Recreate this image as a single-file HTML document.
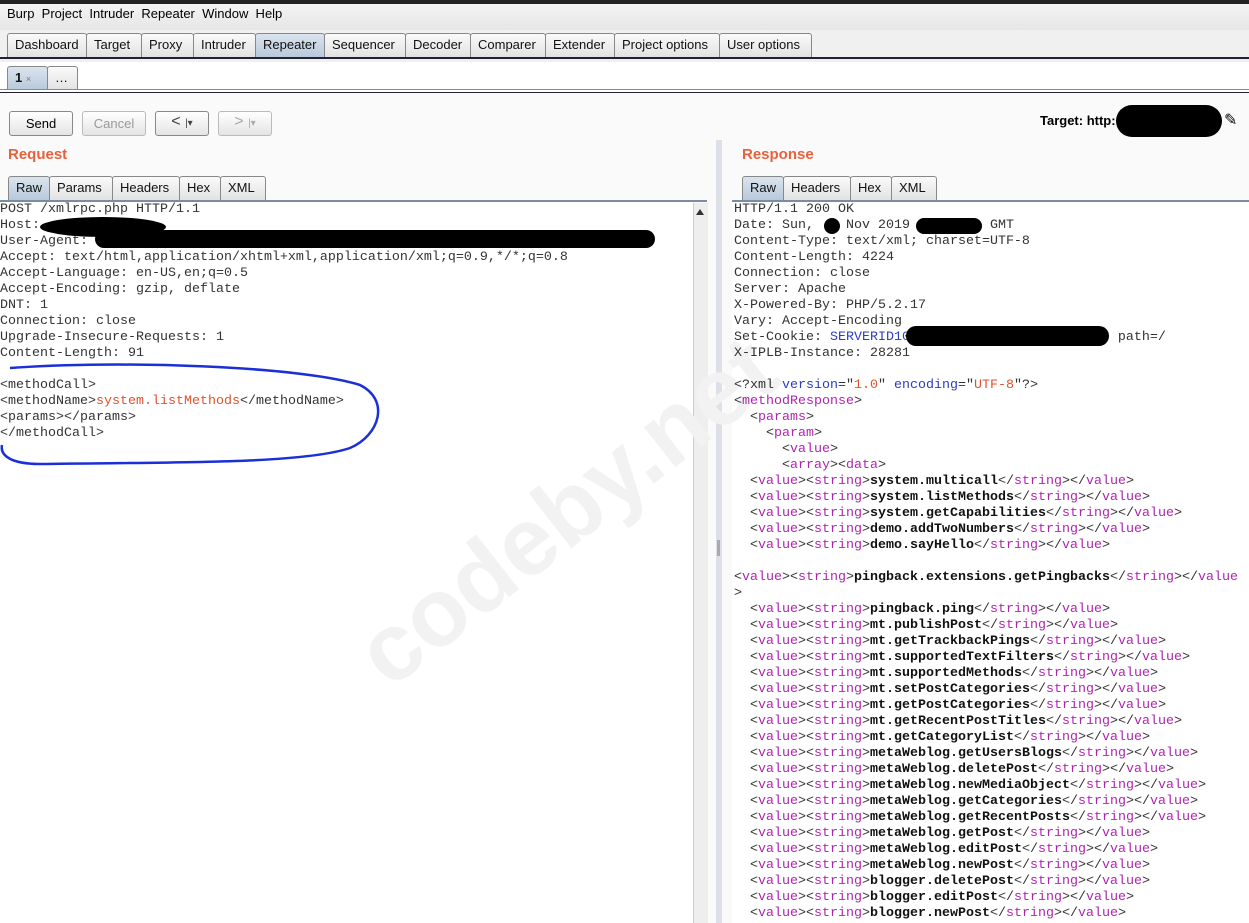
<!DOCTYPE html><html><head><meta charset="utf-8"><style>
body{margin:0;width:1249px;height:923px;overflow:hidden;background:#fff;font-family:"Liberation Sans",sans-serif;font-size:13px;position:relative}
.a{position:absolute}
.tab{position:absolute;height:24px;border:1px solid #888;border-bottom:none;background:linear-gradient(#fafafa,#e2e2e2);border-radius:3px 3px 0 0;box-sizing:border-box;padding:3px 7px 0;font-size:13px;color:#111}
.sel{background:linear-gradient(#dbe4ee,#b7c9db)}
.btn{position:absolute;height:25px;border:1px solid #888;border-radius:3px;background:linear-gradient(#fff,#e4e4e4);box-sizing:border-box;text-align:center;padding-top:4px}
pre{margin:0;font-family:"Liberation Mono",monospace;font-size:13.33px;line-height:16px;color:#333;position:absolute}
.t{color:#b025b0}.b{font-weight:bold;color:#111}.o{color:#e0522a}.bl{color:#2a3fc0}
.blk{position:absolute;background:#000;border-radius:50%}
</style></head><body>
<div class="a" style="left:0;top:0;width:1249px;height:4px;background:#222"></div>
<div class="a" style="left:0;top:4px;width:1249px;height:26px;background:linear-gradient(#f4f4f4,#e6e6e6)"></div>
<div class="a" style="left:7px;top:6px;font-size:13px">Burp&nbsp; Project&nbsp; Intruder&nbsp; Repeater&nbsp; Window&nbsp; Help</div>
<div class="a" style="left:0;top:30px;width:1249px;height:32px;background:#f0f0f0"></div>
<div class="tab" style="left:7px;top:33px;width:80px">Dashboard</div>
<div class="tab" style="left:86px;top:33px;width:56px">Target</div>
<div class="tab" style="left:141px;top:33px;width:53px">Proxy</div>
<div class="tab" style="left:193px;top:33px;width:63px">Intruder</div>
<div class="tab sel" style="left:255px;top:33px;width:70px">Repeater</div>
<div class="tab" style="left:324px;top:33px;width:82px">Sequencer</div>
<div class="tab" style="left:405px;top:33px;width:66px">Decoder</div>
<div class="tab" style="left:470px;top:33px;width:76px">Comparer</div>
<div class="tab" style="left:545px;top:33px;width:70px">Extender</div>
<div class="tab" style="left:614px;top:33px;width:106px">Project options</div>
<div class="tab" style="left:719px;top:33px;width:93px">User options</div>
<div class="a" style="left:0;top:57px;width:1249px;height:2px;background:#223"></div>
<div class="tab sel" style="left:7px;top:66px;width:41px;font-weight:bold">1 <span style="font-size:9px;color:#777;font-weight:normal">×</span></div>
<div class="tab" style="left:47px;top:66px;width:31px">…</div>
<div class="a" style="left:0;top:89px;width:1249px;height:1px;background:#7a8ca0"></div>
<div class="a" style="left:0;top:92px;width:1249px;height:1px;background:#223"></div>
<div class="a" style="left:0;top:93px;width:1249px;height:830px;background:#fafafa"></div>
<div class="btn" style="left:9px;top:111px;width:64px">Send</div>
<div class="btn" style="left:82px;top:111px;width:64px;color:#999;border-color:#bbb">Cancel</div>
<div class="btn" style="left:155px;top:111px;width:54px;font-size:16px;padding-top:1px;color:#444">&lt; <span style="font-size:10px">|▾</span></div>
<div class="btn" style="left:218px;top:111px;width:54px;font-size:16px;padding-top:1px;color:#aaa;border-color:#bbb">&gt; <span style="font-size:10px">|▾</span></div>
<div class="a" style="left:1040px;top:113px;font-weight:bold">Target: http:</div>
<div class="blk" style="left:1116px;top:105px;width:106px;height:32px;border-radius:16px"></div>
<div class="a" style="left:1224px;top:110px;font-size:16px">✎</div>
<div class="a" style="left:8px;top:146px;font-size:15px;font-weight:bold;color:#e8603c">Request</div>
<div class="a" style="left:742px;top:146px;font-size:15px;font-weight:bold;color:#e8603c">Response</div>
<div class="tab sel" style="left:8px;top:176px;width:42px">Raw</div>
<div class="tab" style="left:49px;top:176px;width:64px">Params</div>
<div class="tab" style="left:112px;top:176px;width:68px">Headers</div>
<div class="tab" style="left:179px;top:176px;width:42px">Hex</div>
<div class="tab" style="left:220px;top:176px;width:46px">XML</div>
<div class="a" style="left:0;top:200px;width:707px;height:2px;background:#7a8ca0"></div>
<div class="tab sel" style="left:742px;top:176px;width:42px">Raw</div>
<div class="tab" style="left:783px;top:176px;width:68px">Headers</div>
<div class="tab" style="left:850px;top:176px;width:42px">Hex</div>
<div class="tab" style="left:891px;top:176px;width:46px">XML</div>
<div class="a" style="left:732px;top:200px;width:517px;height:2px;background:#7a8ca0"></div>
<div class="a" style="left:0;top:202px;width:693px;height:721px;background:#fff"></div>
<div class="a" style="left:732px;top:202px;width:517px;height:721px;background:#fff"></div>
<div class="a" style="left:693px;top:203px;width:14px;height:720px;background:#eee;border-left:1px solid #ccc"></div>
<div class="a" style="left:696px;top:209px;width:0;height:0;border-left:4px solid transparent;border-right:4px solid transparent;border-bottom:6px solid #333"></div>
<div class="a" style="left:716px;top:140px;width:6px;height:783px;background:#dde0e8"></div>
<div class="a" style="left:717px;top:540px;width:3px;height:16px;background:#aaa"></div>
<div class="a" style="transform:rotate(-38deg);transform-origin:left;left:370px;top:610px;font-size:96px;font-weight:bold;color:#f2f2f2">codeby.net</div>
<pre style="left:0;top:202px">POST /xmlrpc.php HTTP/1.1
Host:
User-Agent:
Accept: text/html,application/xhtml+xml,application/xml;q=0.9,*/*;q=0.8
Accept-Language: en-US,en;q=0.5
Accept-Encoding: gzip, deflate
DNT: 1
Connection: close
Upgrade-Insecure-Requests: 1
Content-Length: 91

&lt;methodCall&gt;
&lt;methodName&gt;<span class="o">system.listMethods</span>&lt;/methodName&gt;
&lt;params&gt;&lt;/params&gt;
&lt;/methodCall&gt;</pre>
<div class="blk" style="left:40px;top:217px;width:126px;height:20px"></div>
<div class="blk" style="left:95px;top:230px;width:560px;height:18px;border-radius:9px"></div>
<svg class="a" style="left:0;top:360px" width="390" height="110"><path d="M10 8 C120 0 300 6 360 25 C390 40 380 75 350 88 C300 105 150 102 40 104 C10 104 0 95 2 85" fill="none" stroke="#1a2fd8" stroke-width="2.5"/></svg>
<pre style="left:734px;top:202px">HTTP/1.1 200 OK
Date: Sun,    Nov 2019          GMT
Content-Type: text/xml; charset=UTF-8
Content-Length: 4224
Connection: close
Server: Apache
X-Powered-By: PHP/5.2.17
Vary: Accept-Encoding
Set-Cookie: <span class="bl">SERVERID10</span>                          path=/
X-IPLB-Instance: 28281

&lt;?xml <span class="bl">version</span>="<span class="o">1.0</span>" <span class="bl">encoding</span>="<span class="o">UTF-8</span>"?&gt;
&lt;<span class="t">methodResponse</span>&gt;
  &lt;<span class="t">params</span>&gt;
    &lt;<span class="t">param</span>&gt;
      &lt;<span class="t">value</span>&gt;
      &lt;<span class="t">array</span>&gt;&lt;<span class="t">data</span>&gt;
</pre>
<div class="blk" style="left:824px;top:218px;width:16px;height:16px"></div>
<div class="blk" style="left:916px;top:218px;width:66px;height:16px;border-radius:8px"></div>
<div class="blk" style="left:906px;top:326px;width:203px;height:20px;border-radius:10px"></div>
<pre style="left:734px;top:474px"><script>
var n=["system.multicall","system.listMethods","system.getCapabilities","demo.addTwoNumbers","demo.sayHello"];
var m=["pingback.ping","mt.publishPost","mt.getTrackbackPings","mt.supportedTextFilters","mt.supportedMethods","mt.setPostCategories","mt.getPostCategories","mt.getRecentPostTitles","mt.getCategoryList","metaWeblog.getUsersBlogs","metaWeblog.deletePost","metaWeblog.newMediaObject","metaWeblog.getCategories","metaWeblog.getRecentPosts","metaWeblog.getPost","metaWeblog.editPost","metaWeblog.newPost","blogger.deletePost","blogger.editPost","blogger.newPost"];
function l(x,p){return p+'&lt;<span class="t">value</span>&gt;&lt;<span class="t">string</span>&gt;<span class="b">'+x+'</span>&lt;/<span class="t">string</span>&gt;&lt;/<span class="t">value</span>&gt;';}
var s=n.map(function(x){return l(x,'  ')}).join('\n');
s+='\n\n'+l('pingback.extensions.getPingbacks','').replace(/&gt;$/,'')+'\n&gt;\n';
s+=m.map(function(x){return l(x,'  ')}).join('\n');
document.write(s);
</script></pre>
</body></html>
